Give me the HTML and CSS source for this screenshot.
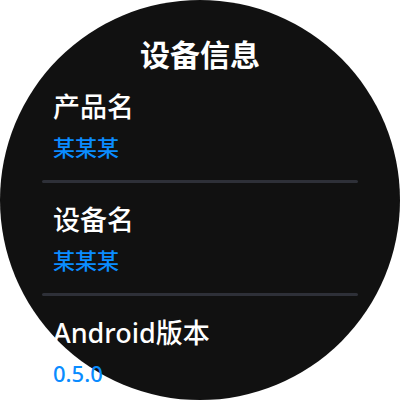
FILE: index.html
```html
<!DOCTYPE html>
<html lang="zh-CN">
<head>
<meta charset="utf-8">
<title>设备信息</title>
<link rel="stylesheet" href="styles.css">
</head>
<body>
<div class="watch">
  <h1 class="title">设备信息</h1>
  <div class="list">
    <div class="item">
      <div class="item-title">产品名</div>
      <div class="item-value">某某某</div>
    </div>
    <div class="divider"></div>
    <div class="item">
      <div class="item-title">设备名</div>
      <div class="item-value">某某某</div>
    </div>
    <div class="divider"></div>
    <div class="item">
      <div class="item-title">Android版本</div>
      <div class="item-value">0.5.0</div>
    </div>
  </div>
</div>
</body>
</html>
```
FILE: styles.css
```css
html, body {
  margin: 0;
  padding: 0;
  background: #ffffff;
  overflow: hidden;
}
body {
  font-family: "Noto Sans", "Noto Sans CJK SC", sans-serif;
}
.watch {
  width: 400px;
  height: 400px;
  border-radius: 50%;
  background: #111111;
  box-sizing: border-box;
  padding-top: 40px;
  display: flex;
  flex-direction: column;
}
.title {
  margin: 0;
  font-size: 30px;
  line-height: 30px;
  font-weight: 600;
  color: #ffffff;
  text-align: center;
}
.list {
  margin-top: 23px;
  padding: 0 42px;
  display: flex;
  flex-direction: column;
}
.item {
  padding-left: 11px;
  display: flex;
  flex-direction: column;
}
.item-title {
  font-size: 27px;
  line-height: 27px;
  color: #ffffff;
  font-weight: 500;
  white-space: nowrap;
}
.item-value {
  margin-top: 16px;
  font-size: 22px;
  line-height: 22px;
  color: #0a8cff;
  font-weight: 500;
  white-space: nowrap;
}
.divider {
  height: 3px;
  border-radius: 2px;
  background: #2e3038;
  margin: 22px 0 23px;
}
```
